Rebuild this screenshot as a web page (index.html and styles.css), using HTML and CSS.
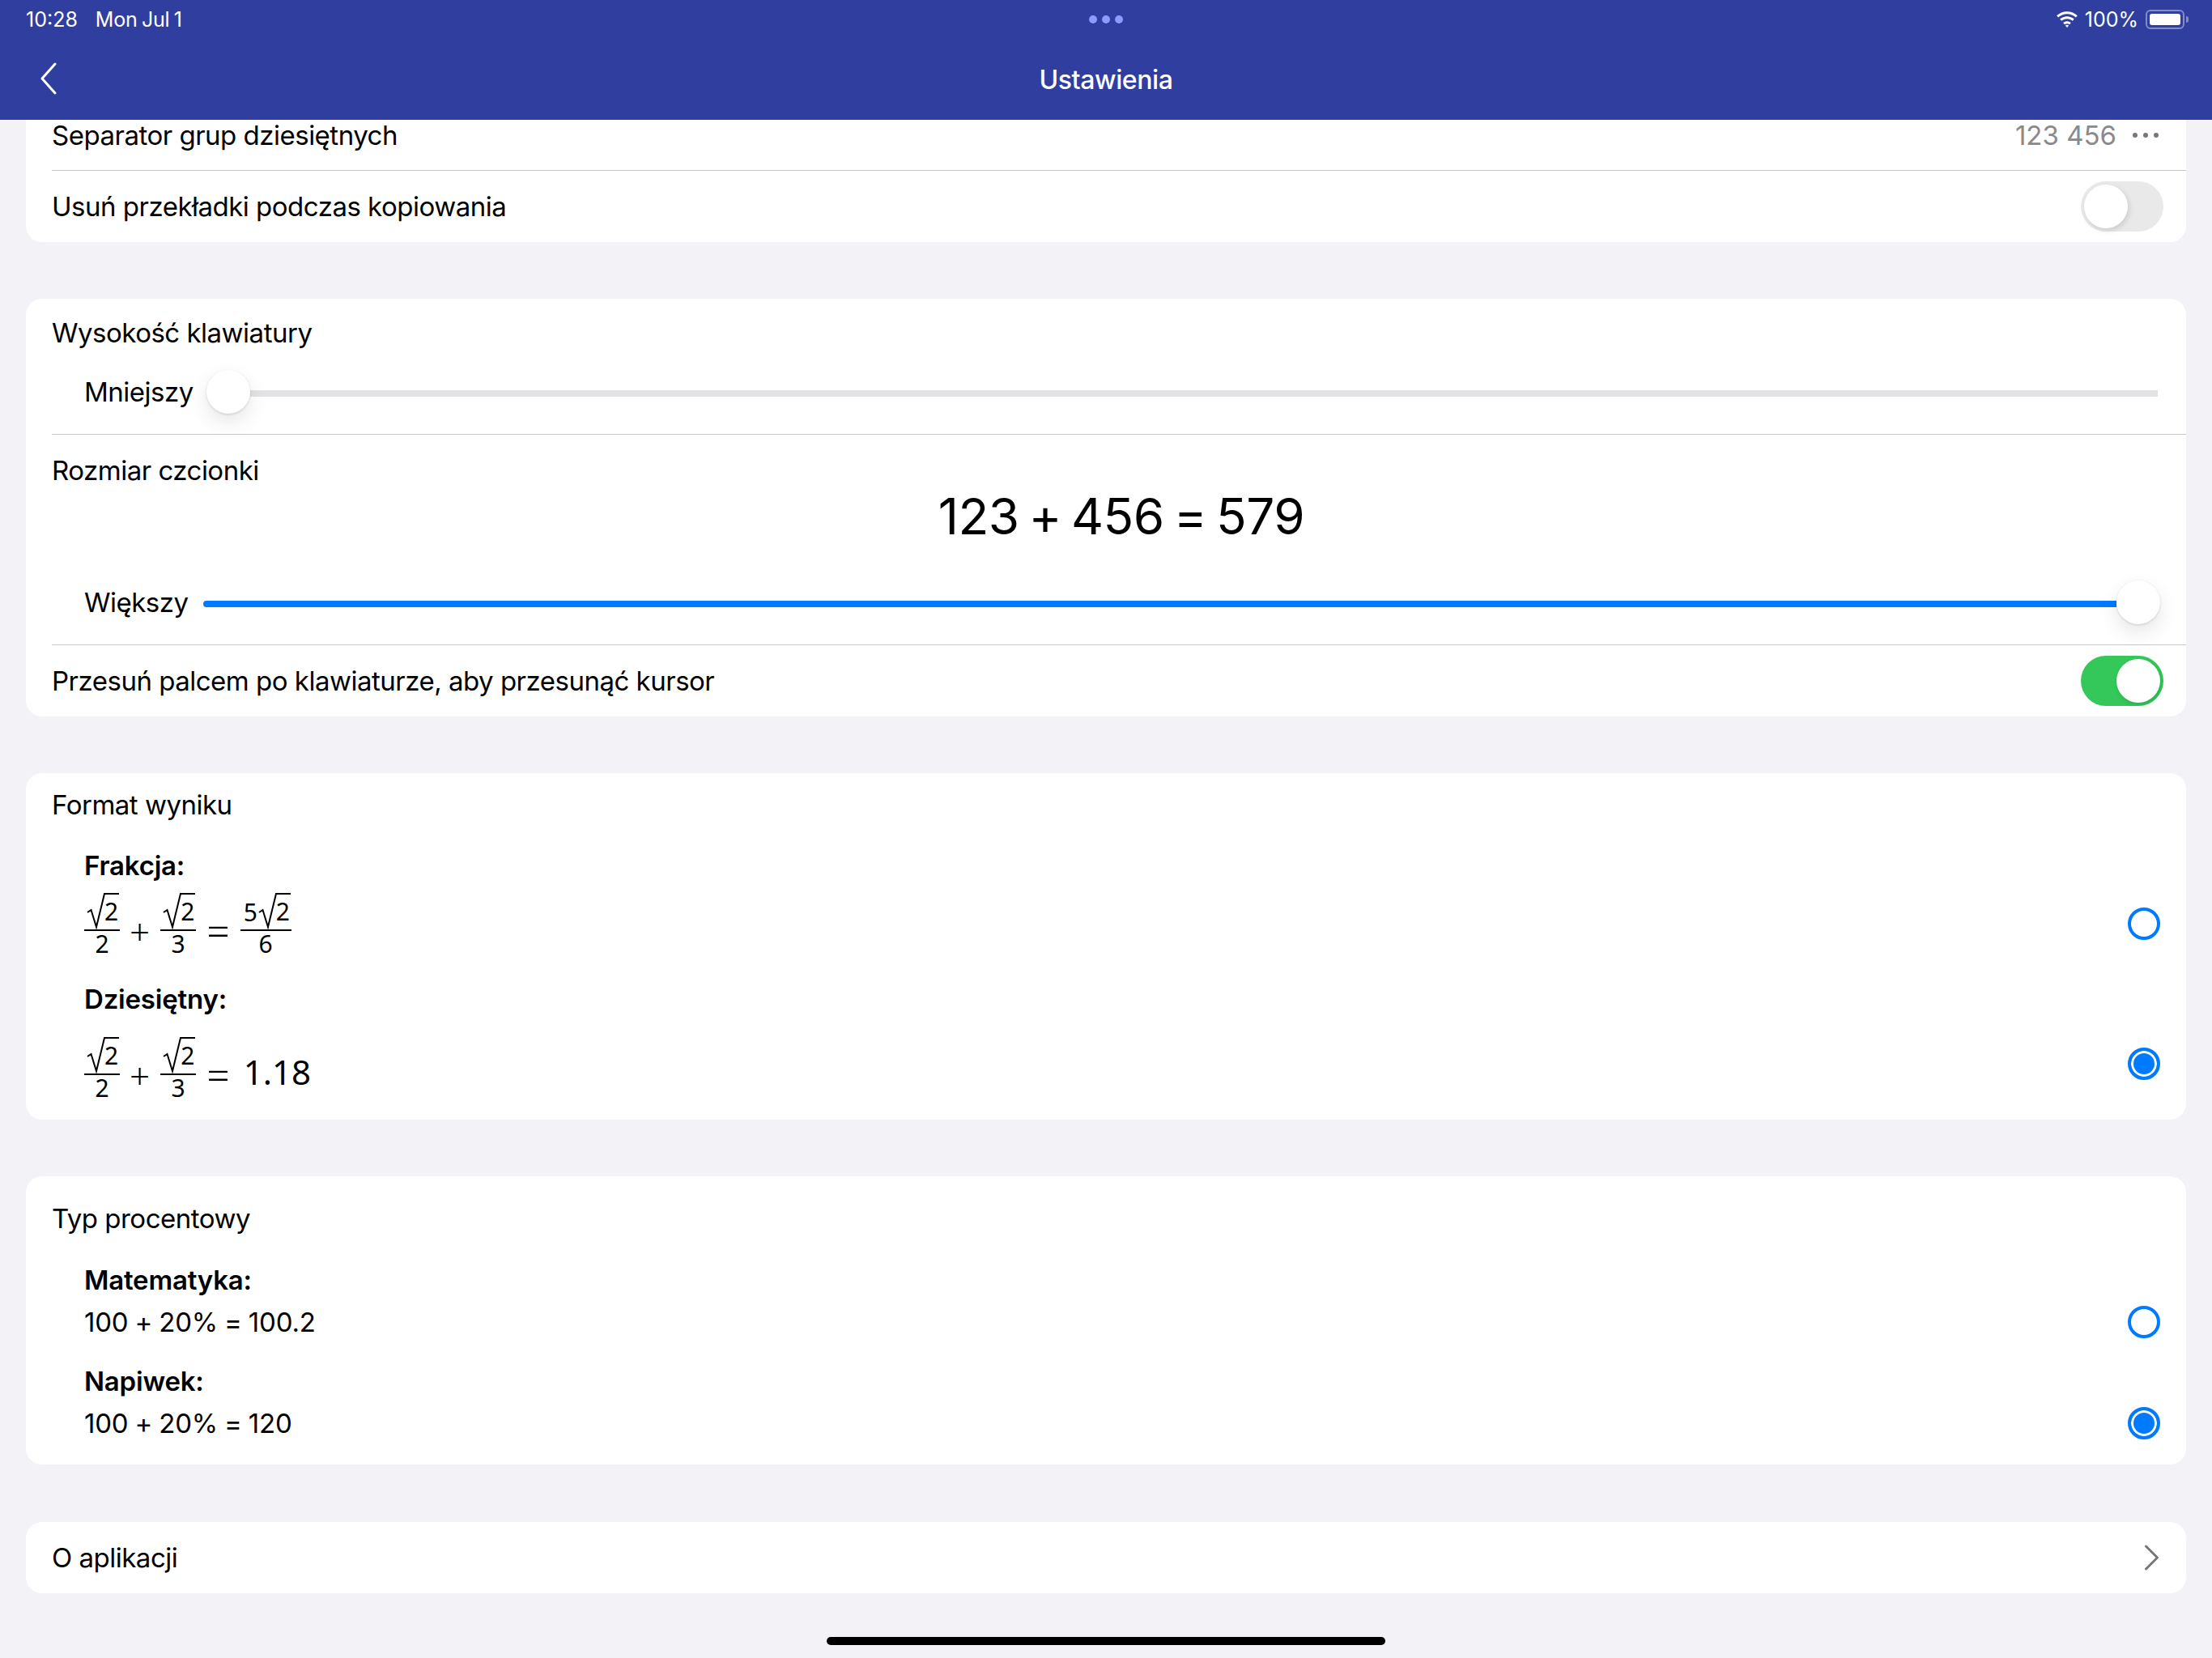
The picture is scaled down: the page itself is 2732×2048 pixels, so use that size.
FILE: index.html
```html
<!DOCTYPE html>
<html lang="pl">
<head>
<meta charset="utf-8">
<title>Ustawienia</title>
<link rel="stylesheet" href="styles.css">
</head>
<body>
<header class="appbar">
  <div class="status">
    <div class="status-left"><span>10:28</span><span class="status-date">Mon Jul 1</span></div>
    <div class="multitask"><i></i><i></i><i></i></div>
    <div class="status-right">
      <svg class="wifi" width="28" height="20" viewBox="0 0 28 20"><path d="M14 3.2c4.2 0 8 1.600 10.900 4.300l1.900-2.200C23.400 2.100 18.900 0.200 14 0.200S4.600 2.100 1.200 5.300l1.900 2.200C6 4.800 9.800 3.200 14 3.200zM14 9.200c2.600 0 5 1 6.800 2.600l2-2.200C20.400 7.500 17.300 6.200 14 6.200S7.600 7.500 5.200 9.600l2 2.200C9 10.200 11.400 9.200 14 9.200zM14 15.200c1.200 0 2.200.4 3 1.100l1.900-2.200C17.500 13 15.800 12.200 14 12.200s-3.500.8-4.900 1.900l1.900 2.200c.8-.7 1.800-1.100 3-1.100zM14 20l2.200-2.400c-.6-.5-1.400-.8-2.200-.8s-1.600.3-2.200.8z" fill="#fff"/></svg>
      <span>100%</span>
      <div class="battery"><div class="battery-level"></div></div>
      <div class="battery-tip"></div>
    </div>
  </div>
  <div class="navbar">
    <svg class="back" width="22" height="40" viewBox="0 0 22 40"><path d="M19 2 L3 20 L19 38" fill="none" stroke="#fff" stroke-width="3" stroke-linecap="round" stroke-linejoin="round"/></svg>
    <h1 class="title">Ustawienia</h1>
  </div>
</header>
<main class="content">
  <section class="card">
    <div class="row row-cut sep">
      <span>Separator grup dziesiętnych</span>
      <span class="value">123 456<span class="dots"><i></i><i></i><i></i></span></span>
    </div>
    <div class="row row-last">
      <span>Usuń przekładki podczas kopiowania</span>
      <div class="switch"><div class="knob"></div></div>
    </div>
  </section>

  <section class="card">
    <div class="group-title">Wysokość klawiatury</div>
    <div class="slider-row slider-small sep">
      <span class="slider-label">Mniejszy</span>
      <div class="thumb"></div>
      <div class="track"></div>
    </div>
    <div class="group-title title-font">Rozmiar czcionki</div>
    <div class="sample">123 + 456 = 579</div>
    <div class="slider-row slider-large sep">
      <span class="slider-label">Większy</span>
      <div class="track track-on"></div>
      <div class="thumb"></div>
    </div>
    <div class="row row-last">
      <span>Przesuń palcem po klawiaturze, aby przesunąć kursor</span>
      <div class="switch switch-on"><div class="knob"></div></div>
    </div>
  </section>

  <section class="card card-format">
    <div class="group-title title-format">Format wyniku</div>
    <div class="option-label opt-frac">Frakcja:</div>
    <div class="option math-a">
      <div class="math">
        <div class="frac"><div class="num"><svg class="rad" width="23" height="45" viewBox="0 0 23 45"><path d="M1 24 L5.500 21 L12 42 L22 1 H23" fill="none" stroke="#000" stroke-width="2"/></svg><span class="radicand">2</span></div><div class="den">2</div></div>
        <span class="op op-plus">+</span>
        <div class="frac"><div class="num"><svg class="rad" width="23" height="45" viewBox="0 0 23 45"><path d="M1 24 L5.500 21 L12 42 L22 1 H23" fill="none" stroke="#000" stroke-width="2"/></svg><span class="radicand">2</span></div><div class="den">3</div></div>
        <span class="op op-eq">=</span>
        <div class="frac"><div class="num"><span class="coef">5</span><svg class="rad" width="23" height="45" viewBox="0 0 23 45"><path d="M1 24 L5.500 21 L12 42 L22 1 H23" fill="none" stroke="#000" stroke-width="2"/></svg><span class="radicand">2</span></div><div class="den">6</div></div>
      </div>
      <div class="radio"></div>
    </div>
    <div class="option-label opt-dec">Dziesiętny:</div>
    <div class="option math-b">
      <div class="math">
        <div class="frac"><div class="num"><svg class="rad" width="23" height="45" viewBox="0 0 23 45"><path d="M1 24 L5.500 21 L12 42 L22 1 H23" fill="none" stroke="#000" stroke-width="2"/></svg><span class="radicand">2</span></div><div class="den">2</div></div>
        <span class="op op-plus">+</span>
        <div class="frac"><div class="num"><svg class="rad" width="23" height="45" viewBox="0 0 23 45"><path d="M1 24 L5.500 21 L12 42 L22 1 H23" fill="none" stroke="#000" stroke-width="2"/></svg><span class="radicand">2</span></div><div class="den">3</div></div>
        <span class="op op-eq">=</span>
        <span class="result">1.18</span>
      </div>
      <div class="radio radio-on"></div>
    </div>
  </section>

  <section class="card card-percent">
    <div class="group-title title-percent">Typ procentowy</div>
    <div class="option-label opt-math">Matematyka:</div>
    <div class="option expr"><span>100 + 20% = 100.2</span><div class="radio"></div></div>
    <div class="option-label opt-tip">Napiwek:</div>
    <div class="option expr"><span>100 + 20% = 120</span><div class="radio radio-on"></div></div>
  </section>

  <section class="card">
    <div class="row row-single">
      <span>O aplikacji</span>
      <svg class="chevron" width="20" height="32" viewBox="0 0 20 32"><path d="M2.500 2 L16.500 16 L2.500 30" fill="none" stroke="#777" stroke-width="3" stroke-linecap="round" stroke-linejoin="round"/></svg>
    </div>
  </section>
</main>
<div class="home-bar"></div>
</body>
</html>
```
FILE: styles.css
```css
* { box-sizing: border-box; }
html, body { margin: 0; padding: 0; }
body {
  width: 2732px;
  height: 2048px;
  overflow: hidden;
  position: relative;
  background: #f2f2f7;
  color: #000;
  font-family: Inter, "Noto Sans", sans-serif;
  font-size: 33px;
  letter-spacing: -0.5px;
}
.appbar { height: 148px; background: #303f9f; color: #fff; position: relative; }
.status {
  height: 48px;
  padding: 0 32px;
  display: flex;
  align-items: center;
  justify-content: space-between;
  position: relative;
  font-size: 25px;
  letter-spacing: 0;
}
.status-left { display: flex; gap: 22px; }
.status-date { word-spacing: -1.500px; letter-spacing: -0.2px; }
.multitask { position: absolute; left: 50%; top: 19px; display: flex; gap: 6px; transform: translateX(-50%); }
.multitask i { width: 10px; height: 10px; border-radius: 50%; background: #8c9bff; display: block; }
.status-right { display: flex; align-items: center; margin-right: -3px; }
.wifi { margin-right: 8px; }
.battery {
  width: 48px; height: 24px; margin-left: 9px; padding: 3px;
  border: 2px solid rgba(255,255,255,.4); border-radius: 6px;
}
.battery-level { width: 100%; height: 100%; background: #fff; border-radius: 3px; }
.battery-tip { width: 3px; height: 8px; margin-left: 2px; background: rgba(255,255,255,.4); border-radius: 0 3px 3px 0; }
.navbar { height: 100px; display: flex; align-items: center; justify-content: center; position: relative; }
.back { position: absolute; left: 49px; top: 29px; }
.title { margin: 0; font-size: 32px; font-weight: 500; letter-spacing: -0.4px; }

.content { padding: 0 32px; display: flex; flex-direction: column; gap: 70px; }
.card { background: #fff; border-radius: 20px; }
.card:first-child { border-radius: 0 0 20px 20px; }
.sep { position: relative; }
.sep::after { content: ""; position: absolute; left: 32px; right: 0; bottom: 0; height: 1.500px; background: #c6c6c8; }
.row { display: flex; align-items: center; justify-content: space-between; padding: 0 28px 0 32px; }
.row-cut { height: 63px; padding-right: 34px; padding-bottom: 25px; }
.row-last { height: 88px; }
.row-single { height: 88px; padding-right: 32px; }
.value { color: #8a8a8e; display: flex; align-items: center; letter-spacing: 0; }
.dots { display: flex; gap: 7px; margin-left: 20px; }
.dots i { width: 6px; height: 6px; border-radius: 50%; background: #777; display: block; }
.switch {
  width: 102px; height: 62px; border-radius: 31px; background: #e9e9ea; padding: 4px;
  display: flex;
}
.switch-on { background: #34c759; justify-content: flex-end; }
.knob { width: 54px; height: 54px; border-radius: 50%; background: #fff; box-shadow: 2px 3px 6px rgba(0,0,0,.12); }

.group-title { line-height: 40px; padding: 22px 32px 0; height: 62px; }
.title-font { padding-top: 24px; height: 64px; }
.title-format { padding-top: 19px; }
.title-percent { padding-top: 32px; height: 72px; }
.slider-row { display: flex; align-items: center; padding: 0 32px 0 72px; }
.slider-label { flex: none; }
.slider-small { height: 106px; }
.slider-small .slider-label { margin-right: 16px; }
.slider-large { height: 124px; padding-top: 18px; }
.slider-large .slider-label { margin-right: 18px; }
.thumb {
  flex: none; width: 54px; height: 54px; border-radius: 50%; background: #fff;
  box-shadow: 0 1px 3px rgba(0,0,0,.14), 0 10px 24px rgba(0,0,0,.1);
  position: relative; z-index: 1;
}
.track { flex: 1; height: 8px; margin: 4px 3px 0 0; background: #e3e3e6; }
.track-on { background: #007aff; margin-right: 0; border-radius: 4px 0 0 4px; }
.sample { height: 72px; line-height: 74px; text-align: center; padding-left: 38px; font-size: 62px; letter-spacing: -0.5px; word-spacing: -5px; }

.card-format { height: 428px; }
.card-percent { height: 356px; margin-bottom: 1px; }
.option-label { padding-left: 72px; font-weight: 600; line-height: 40px; height: 40px; letter-spacing: -0.2px; }
.opt-frac { margin-top: 32px; }
.opt-dec { margin-top: 34px; }
.option { display: flex; justify-content: space-between; align-items: center; padding: 0 32px 0 72px; }
.math-a { margin-top: 16px; height: 75px; }
.math-a .radio { margin-top: -4px; }
.math-b { margin-top: 32px; height: 75px; }
.math-b .radio { margin-top: -19px; }
.math { display: flex; align-items: flex-start; font-family: "Noto Sans", sans-serif; font-size: 30px; letter-spacing: 0; }
.frac { display: flex; flex-direction: column; align-items: stretch; }
.num { display: flex; justify-content: center; align-items: flex-start; height: 47px; border-bottom: 2px solid #000; padding: 0 1px 0 3px; }
.rad { display: block; flex: none; }
.radicand { border-top: 2px solid #000; height: 40px; width: 18px; margin-left: -1px; line-height: 30px; padding-top: 6px; }
.coef { line-height: 32px; padding-top: 8px; margin-right: -1px; width: 20px; padding-left: 1px; }
.den { text-align: center; line-height: 32px; margin-top: 0; }
.op { font-size: 44px; font-weight: 300; line-height: 94px; height: 75px; }
.op-plus { margin: 0 13px 0 12px; }
.op-eq { margin: 0 13px 0 13px; font-size: 50px; line-height: 92px; }
.result { font-size: 42px; line-height: 86px; margin-left: 4px; letter-spacing: 0; }
.radio { flex: none; width: 40px; height: 40px; border-radius: 50%; border: 4px solid #007aff; background: #fff; }
.radio-on { background: #007aff; box-shadow: inset 0 0 0 3px #fff; }

.opt-math { margin-top: 36px; }
.opt-tip { margin-top: 28px; }
.expr { height: 50px; margin-top: 7px; word-spacing: -1px; letter-spacing: -0.2px; }
.home-bar { position: absolute; left: 1021px; top: 2022px; width: 690px; height: 10px; border-radius: 5px; background: #000; }
```
